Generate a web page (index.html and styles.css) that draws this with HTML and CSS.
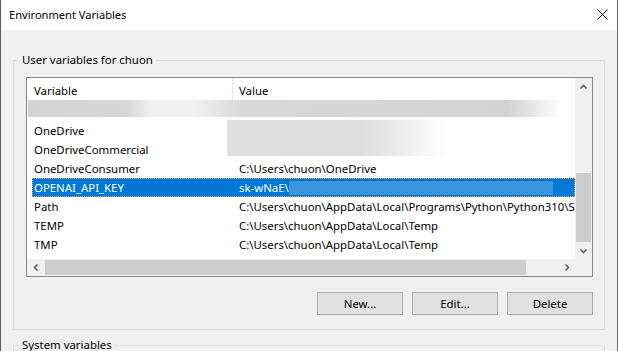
FILE: index.html
```html
<!DOCTYPE html>
<html lang="en">
<head>
    <meta charset="UTF-8">
    <meta name="viewport" content="width=device-width, initial-scale=1.0">
    <title>Environment Variables</title>
    <link rel="stylesheet" href="styles.css">
</head>
<body>
    <div class="window">
        <div class="titlebar">
            <span class="title">Environment Variables</span>
            <svg class="close" width="11" height="11" viewBox="0 0 11 11">
                <path d="M0.5 0.5L10.5 10.5M10.5 0.5L0.5 10.5" stroke="#000" stroke-width="1" fill="none"/>
            </svg>
        </div>
        <div class="content">
            <div class="group">
                <div class="group-title">User variables for chuon</div>
                <div class="list">
                    <div class="list-main">
                        <div class="list-header">
                            <div class="head-name">Variable</div>
                            <div class="head-value">Value</div>
                        </div>
                        <div class="list-rows">
                            <div class="row"><div class="smudge-wide"></div></div>
                            <div class="row"><div class="col-name">OneDrive</div><div class="col-value"></div></div>
                            <div class="row"><div class="col-name">OneDriveCommercial</div><div class="col-value"></div></div>
                            <div class="row"><div class="col-name">OneDriveConsumer</div><div class="col-value">C:\Users\chuon\OneDrive</div></div>
                            <div class="row selected"><div class="col-name">OPENAI_API_KEY</div><div class="col-value">sk-wNaE\<span class="smudge-key"></span></div></div>
                            <div class="row"><div class="col-name">Path</div><div class="col-value">C:\Users\chuon\AppData\Local\Programs\Python\Python310\S</div></div>
                            <div class="row"><div class="col-name">TEMP</div><div class="col-value">C:\Users\chuon\AppData\Local\Temp</div></div>
                            <div class="row"><div class="col-name">TMP</div><div class="col-value">C:\Users\chuon\AppData\Local\Temp</div></div>
                            <div class="smudge-value"></div>
                        </div>
                    </div>
                    <div class="vscroll">
                        <div class="arrow">
                            <svg width="9" height="6" viewBox="0 0 9 6"><path d="M1.5 4.5L4.5 1.5L7.5 4.5" fill="none" stroke="#606060" stroke-width="1.6"/></svg>
                        </div>
                        <div class="vtrack"><div class="vthumb"></div></div>
                        <div class="arrow">
                            <svg width="9" height="6" viewBox="0 0 9 6"><path d="M1.5 1.5L4.5 4.5L7.5 1.5" fill="none" stroke="#606060" stroke-width="1.6"/></svg>
                        </div>
                    </div>
                    <div class="hscroll">
                        <div class="arrow">
                            <svg width="6" height="9" viewBox="0 0 6 9"><path d="M4.5 1.5L1.5 4.5L4.5 7.5" fill="none" stroke="#606060" stroke-width="1.6"/></svg>
                        </div>
                        <div class="htrack"><div class="hthumb"></div></div>
                        <div class="arrow">
                            <svg width="6" height="9" viewBox="0 0 6 9"><path d="M1.5 1.5L4.5 4.5L1.5 7.5" fill="none" stroke="#606060" stroke-width="1.6"/></svg>
                        </div>
                    </div>
                    <div class="corner"></div>
                </div>
                <div class="buttons">
                    <button>New...</button>
                    <button>Edit...</button>
                    <button>Delete</button>
                </div>
            </div>
            <div class="group group-system">
                <div class="group-title">System variables</div>
            </div>
        </div>
    </div>
</body>
</html>
```

FILE: styles.css
```css
body {
    margin: 0;
    background: #3c3c3c;
    font-family: "Segoe UI", "Noto Sans", "Liberation Sans", sans-serif;
    font-size: 11.4px;
    color: #000;
}
.window {
    width: 616px;
    height: 351px;
    border-left: 1px solid #5a5a5a;
    border-right: 1px solid #6a6a6a;
    background: #f0f0f0;
    overflow: hidden;
}
.titlebar {
    height: 30px;
    box-sizing: border-box;
    padding: 0 9px 2px 8px;
    background: #fff;
    display: flex;
    align-items: center;
    justify-content: space-between;
}
.title {
    font-size: 11.1px;
}
.content {
    padding: 30px 12px 0;
}
.group {
    border: 1px solid #dcdcdc;
    padding: 0 11px 14px 12px;
}
.group-title {
    display: table;
    margin: -9px 0 9px -7px;
    padding: 0 3px;
    line-height: 16px;
    background: #f0f0f0;
}
.group-system {
    margin-top: 15px;
    height: 40px;
}
.list {
    display: grid;
    grid-template-columns: 1fr 17px;
    grid-template-rows: 181px 17px;
    border: 1px solid #828790;
    background: #fff;
}
.list-main {
    overflow: hidden;
}
.list-header {
    display: flex;
    height: 24px;
}
.head-name {
    width: 206px;
    box-sizing: border-box;
    padding-left: 7px;
    border-right: 1px solid #e5e5e5;
    display: flex;
    align-items: center;
}
.head-value {
    padding-left: 6px;
    display: flex;
    align-items: center;
}
.list-rows {
    position: relative;
}
.row {
    display: flex;
    align-items: center;
    height: 19px;
    margin-left: 5px;
    white-space: nowrap;
}
.col-name {
    width: 201px;
    box-sizing: border-box;
    padding-left: 2px;
    flex-shrink: 0;
}
.col-value {
    padding-left: 6px;
}
.row.selected {
    background: #0078d7;
    color: #fff;
    outline: 1px dotted #f2a84a;
    outline-offset: -1px;
}
.smudge-wide {
    align-self: flex-start;
    margin: -2px 0 0 -4px;
    width: 535px;
    height: 17px;
    background: linear-gradient(to right, #d3d3d3 0, #d8d8d8 100px, #f1f1f1 125px, #f1f1f1 165px, #d9d9d9 215px, #d3d3d3 480px, #fff 535px);
}
.smudge-value {
    position: absolute;
    top: 18px;
    left: 200px;
    width: 220px;
    height: 36px;
    background: linear-gradient(to right, #e0e0e0 0, #dddddd 60%, #fff 100%);
}
.smudge-key {
    display: inline-block;
    width: 264px;
    height: 14px;
    vertical-align: middle;
    background: #3b95dc;
}
.vscroll {
    display: flex;
    flex-direction: column;
    background: #f0f0f0;
}
.hscroll {
    display: flex;
    background: #f0f0f0;
}
.arrow {
    width: 17px;
    height: 17px;
    flex-shrink: 0;
    display: flex;
    align-items: center;
    justify-content: center;
}
.vtrack {
    flex: 1;
    display: flex;
    flex-direction: column;
    justify-content: flex-end;
}
.vthumb {
    height: 69px;
    margin: 0 1px;
    background: #cdcdcd;
}
.htrack {
    flex: 1;
}
.hthumb {
    width: 481px;
    height: 15px;
    margin: 1px 0 0 1px;
    background: #cdcdcd;
}
.corner {
    background: #f0f0f0;
}
.buttons {
    display: flex;
    justify-content: flex-end;
    gap: 9px;
    margin-top: 15px;
}
button {
    width: 86px;
    height: 23px;
    padding: 0;
    background: #e1e1e1;
    border: 1px solid #adadad;
    font: inherit;
    color: #000;
}
```
